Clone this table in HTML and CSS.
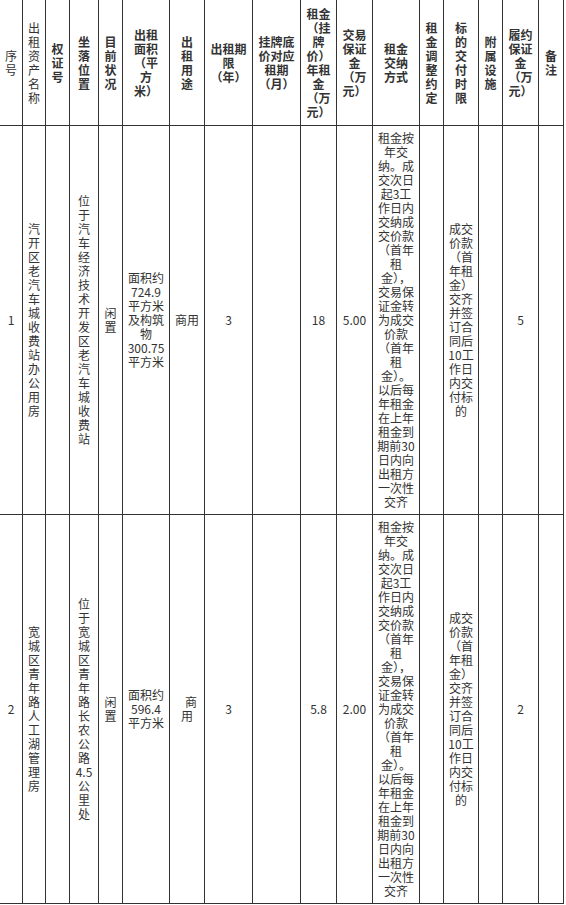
FILE: index.html
```html
<!DOCTYPE html>
<html lang="zh-CN">
<head>
<meta charset="utf-8">
<title>出租资产</title>
<link rel="stylesheet" href="styles.css">
</head>
<body>
<table class="grid">
  <colgroup>
    <col class="w23"><col class="w23"><col class="w24"><col class="w29"><col class="w24">
    <col class="w47"><col class="w35"><col class="w48"><col class="w48"><col class="w36">
    <col class="w36"><col class="w47"><col class="w24"><col class="w35"><col class="w24">
    <col class="w36"><col class="w25">
  </colgroup>
  <thead>
    <tr>
      <th class="light">序<br>号</th>
      <th class="light">出<br>租<br>资<br>产<br>名<br>称</th>
      <th>权<br>证<br>号</th>
      <th>坐<br>落<br>位<br>置</th>
      <th>目<br>前<br>状<br>况</th>
      <th>出租<br>面积<br>（平<br>方<br>米）</th>
      <th>出<br>租<br>用<br>途</th>
      <th>出租期<br>限<br>（年）</th>
      <th>挂牌底<br>价对应<br>租期<br>（月）</th>
      <th>租金<br>（挂<br>牌<br>价）<br>年租<br>金<br>（万<br>元）</th>
      <th>交易<br>保证<br>金<br>（万<br>元）</th>
      <th>租金<br>交纳<br>方式</th>
      <th>租<br>金<br>调<br>整<br>约<br>定</th>
      <th>标<br>的<br>交<br>付<br>时<br>限</th>
      <th>附<br>属<br>设<br>施</th>
      <th>履约<br>保证<br>金<br>（万<br>元）</th>
      <th>备<br>注</th>
    </tr>
  </thead>
  <tbody>
    <tr>
      <td>1</td>
      <td>汽<br>开<br>区<br>老<br>汽<br>车<br>城<br>收<br>费<br>站<br>办<br>公<br>用<br>房</td>
      <td></td>
      <td>位<br>于<br>汽<br>车<br>经<br>济<br>技<br>术<br>开<br>发<br>区<br>老<br>汽<br>车<br>城<br>收<br>费<br>站</td>
      <td>闲<br>置</td>
      <td>面积约<br>724.9<br>平方米<br>及构筑<br>物<br>300.75<br>平方米</td>
      <td>商用</td>
      <td>3</td>
      <td></td>
      <td>18</td>
      <td>5.00</td>
      <td>租金按<br>年交<br>纳。成<br>交次日<br>起3工<br>作日内<br>交纳成<br>交价款<br>（首年<br>租<br>金），<br>交易保<br>证金转<br>为成交<br>价款<br>（首年<br>租<br>金）。<br>以后每<br>年租金<br>在上年<br>租金到<br>期前30<br>日内向<br>出租方<br>一次性<br>交齐</td>
      <td></td>
      <td>成交<br>价款<br>（首<br>年租<br>金）<br>交齐<br>并签<br>订合<br>同后<br>10工<br>作日<br>内交<br>付标<br>的</td>
      <td></td>
      <td>5</td>
      <td></td>
    </tr>
    <tr>
      <td>2</td>
      <td>宽<br>城<br>区<br>青<br>年<br>路<br>人<br>工<br>湖<br>管<br>理<br>房</td>
      <td></td>
      <td>位<br>于<br>宽<br>城<br>区<br>青<br>年<br>路<br>长<br>农<br>公<br>路<br>4.5<br>公<br>里<br>处</td>
      <td>闲<br>置</td>
      <td>面积约<br>596.4<br>平方米</td>
      <td><span class="indent">商</span><br>用</td>
      <td>3</td>
      <td></td>
      <td>5.8</td>
      <td>2.00</td>
      <td>租金按<br>年交<br>纳。成<br>交次日<br>起3工<br>作日内<br>交纳成<br>交价款<br>（首年<br>租<br>金），<br>交易保<br>证金转<br>为成交<br>价款<br>（首年<br>租<br>金）。<br>以后每<br>年租金<br>在上年<br>租金到<br>期前30<br>日内向<br>出租方<br>一次性<br>交齐</td>
      <td></td>
      <td>成交<br>价款<br>（首<br>年租<br>金）<br>交齐<br>并签<br>订合<br>同后<br>10工<br>作日<br>内交<br>付标<br>的</td>
      <td></td>
      <td>2</td>
      <td></td>
    </tr>
  </tbody>
</table>
</body>
</html>
```
FILE: styles.css
```css
html, body {
  margin: 0;
  padding: 0;
  background: #ffffff;
}

body {
  font-family: "Noto Sans CJK SC", "Liberation Sans", sans-serif;
  font-size: 12px;
  color: #333333;
}

.grid {
  border-collapse: separate;
  border-spacing: 0;
  table-layout: fixed;
  width: 564px;
}

.grid th,
.grid td {
  box-sizing: border-box;
  padding: 0;
  border-right: 1px solid #333333;
  border-bottom: 1px solid #333333;
  text-align: center;
  vertical-align: middle;
  font-size: 12px;
  line-height: 14px;
  white-space: nowrap;
  overflow: hidden;
}

.grid th {
  height: 126px;
  font-weight: bold;
  color: #333333;
}

.grid th.light {
  font-weight: normal;
}

.grid td {
  height: 389px;
  font-weight: normal;
}

.indent {
  padding-left: 8px;
}

.w23 { width: 23px; }
.w24 { width: 24px; }
.w25 { width: 25px; }
.w29 { width: 29px; }
.w35 { width: 35px; }
.w36 { width: 36px; }
.w47 { width: 47px; }
.w48 { width: 48px; }
```
